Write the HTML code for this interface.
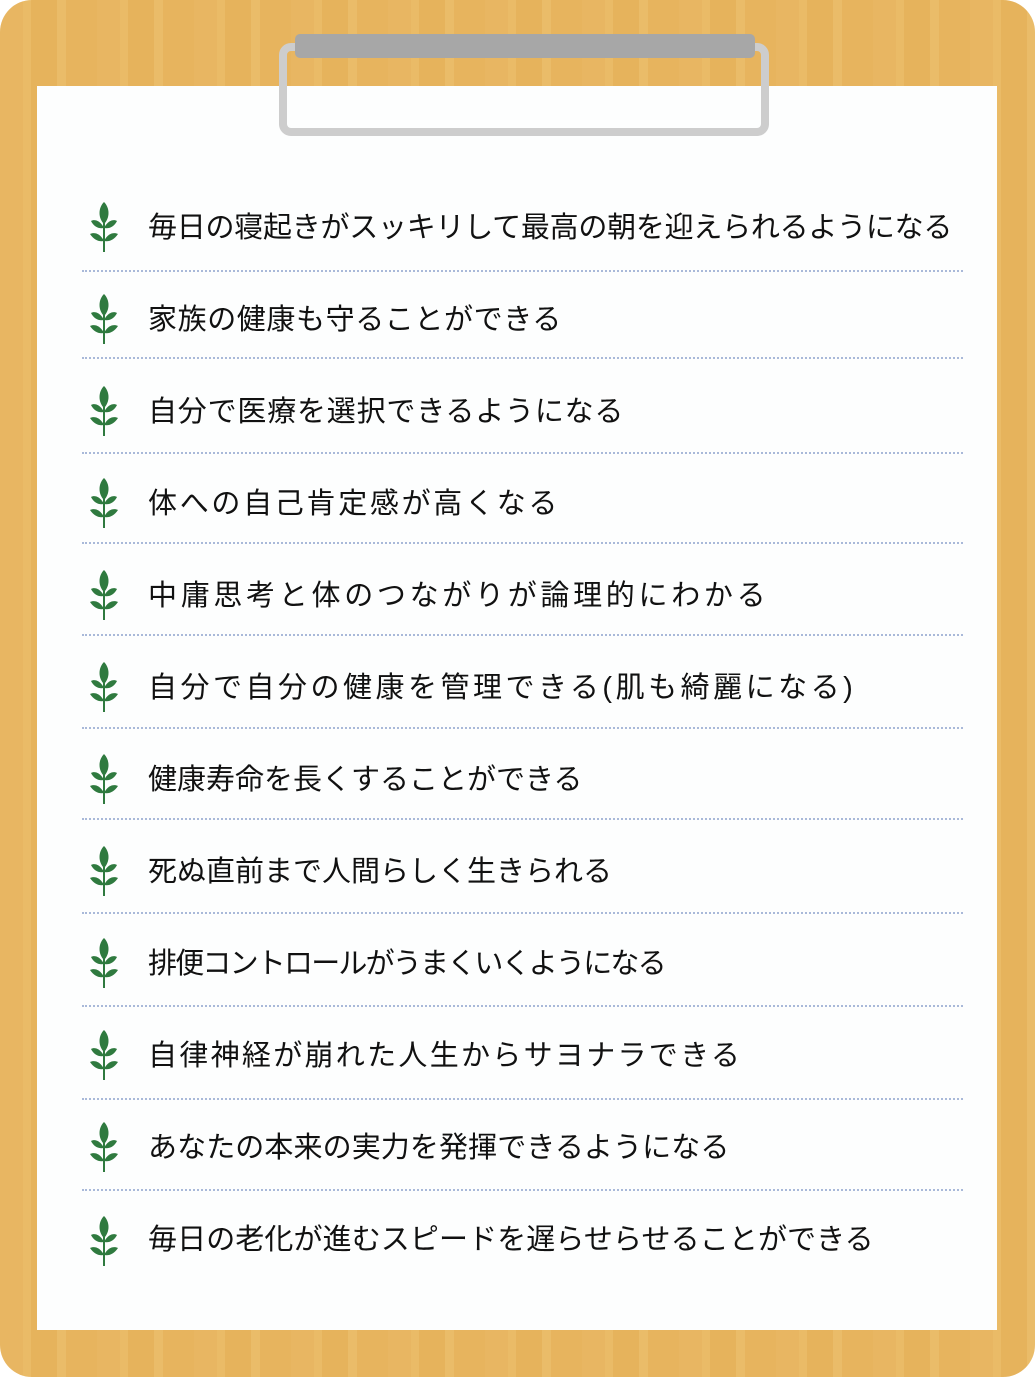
<!DOCTYPE html>
<html><head><meta charset="utf-8"><style>
html,body{margin:0;padding:0}
body{width:1035px;height:1378px;position:relative;overflow:hidden;background:#fff;font-family:"Liberation Sans","Noto Sans CJK JP",sans-serif}
.board{position:absolute;left:0;top:0;width:1035px;height:1377px;border-radius:32px;
background:repeating-linear-gradient(90deg,#e8b662 0 23px,#eabb67 23px 31px,#e6b35c 31px 57px,#eabc69 57px 66px,#e7b45e 66px 97px);}
.paper{position:absolute;left:37px;top:86px;width:960px;height:1244px;background:#fdfefe}
.clipo{position:absolute;left:279px;top:43px;width:474px;height:77px;border:8px solid #cdcdcd;border-radius:12px}
.clipb{position:absolute;left:295px;top:34px;width:460px;height:24px;background:#a7a7a7;border-radius:5px}
.ln{position:absolute;left:82px;width:881px;border-top:2px dotted #a9b9d9;height:0}
.t{position:absolute;left:148px;font-size:29px;line-height:36px;color:#111;white-space:nowrap}
.leaf{position:absolute;left:90px;width:30px;height:52px}
</style></head><body>
<div class="board"></div>
<div class="paper"></div>
<div class="clipo"></div>
<div class="clipb"></div>
<svg width="0" height="0" style="position:absolute"><defs><g id="lf">
<path d="M14 50 L14 14" stroke="#2f7a3f" stroke-width="2" fill="none"/>
<path d="M14 0 C20 6 20 16 14 22 C8 16 8 6 14 0Z" fill="#2f7a3f"/>
<path d="M14 26 C10 18 4 17 1 19 C4 25 9 27 14 26Z" fill="#2f7a3f"/>
<path d="M14 26 C18 18 24 17 27 19 C24 25 19 27 14 26Z" fill="#2f7a3f"/>
<path d="M14 39 C10 31 4 30 0 32 C4 38 9 40 14 39Z" fill="#2f7a3f"/>
<path d="M14 39 C18 31 24 30 28 32 C24 38 19 40 14 39Z" fill="#2f7a3f"/>
</g></defs></svg>

<svg class="leaf" style="top:202px"><use href="#lf"/></svg>
<svg class="leaf" style="top:294px"><use href="#lf"/></svg>
<svg class="leaf" style="top:386px"><use href="#lf"/></svg>
<svg class="leaf" style="top:478px"><use href="#lf"/></svg>
<svg class="leaf" style="top:570px"><use href="#lf"/></svg>
<svg class="leaf" style="top:662px"><use href="#lf"/></svg>
<svg class="leaf" style="top:754px"><use href="#lf"/></svg>
<svg class="leaf" style="top:846px"><use href="#lf"/></svg>
<svg class="leaf" style="top:938px"><use href="#lf"/></svg>
<svg class="leaf" style="top:1030px"><use href="#lf"/></svg>
<svg class="leaf" style="top:1122px"><use href="#lf"/></svg>
<svg class="leaf" style="top:1216px"><use href="#lf"/></svg>

<div class="t" style="top:210px;letter-spacing:-0.25px">毎日の寝起きがスッキリして最高の朝を迎えられるようになる</div>
<div class="t" style="top:302px;letter-spacing:0.6px">家族の健康も守ることができる</div>
<div class="t" style="top:394px;letter-spacing:0.8px">自分で医療を選択できるようになる</div>
<div class="t" style="top:486px;letter-spacing:2.7px">体への自己肯定感が高くなる</div>
<div class="t" style="top:578px;letter-spacing:3.7px">中庸思考と体のつながりが論理的にわかる</div>
<div class="t" style="top:670px;letter-spacing:3.5px">自分で自分の健康を管理できる(肌も綺麗になる)</div>
<div class="t" style="top:762px;letter-spacing:0px">健康寿命を長くすることができる</div>
<div class="t" style="top:854px;letter-spacing:0px">死ぬ直前まで人間らしく生きられる</div>
<div class="t" style="top:946px;letter-spacing:-1.8px">排便コントロールがうまくいくようになる</div>
<div class="t" style="top:1038px;letter-spacing:2.3px">自律神経が崩れた人生からサヨナラできる</div>
<div class="t" style="top:1130px;letter-spacing:0.1px">あなたの本来の実力を発揮できるようになる</div>
<div class="t" style="top:1222px;letter-spacing:0.1px">毎日の老化が進むスピードを遅らせらせることができる</div>

<div class="ln" style="top:270px"></div>
<div class="ln" style="top:357px"></div>
<div class="ln" style="top:452px"></div>
<div class="ln" style="top:542px"></div>
<div class="ln" style="top:634px"></div>
<div class="ln" style="top:727px"></div>
<div class="ln" style="top:818px"></div>
<div class="ln" style="top:912px"></div>
<div class="ln" style="top:1005px"></div>
<div class="ln" style="top:1098px"></div>
<div class="ln" style="top:1189px"></div>
</body></html>
